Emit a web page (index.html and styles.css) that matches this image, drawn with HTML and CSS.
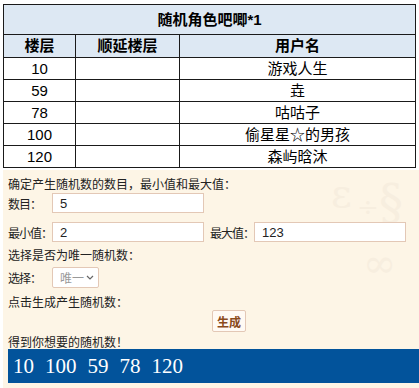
FILE: index.html
```html
<!DOCTYPE html>
<html lang="zh-CN">
<head>
    <meta charset="UTF-8">
    <meta name="viewport" content="width=device-width, initial-scale=1.0">
    <title>随机角色吧唧</title>
    <link rel="stylesheet" href="styles.css">
</head>
<body>
    <table class="result-table">
        <colgroup>
            <col class="col-floor">
            <col class="col-delay">
            <col>
        </colgroup>
        <tr class="title-row">
            <th colspan="3">随机角色吧唧*1</th>
        </tr>
        <tr class="head-row">
            <th>楼层</th>
            <th>顺延楼层</th>
            <th>用户名</th>
        </tr>
        <tr><td>10</td><td></td><td>游戏人生</td></tr>
        <tr><td>59</td><td></td><td>垚</td></tr>
        <tr><td>78</td><td></td><td>咕咕子</td></tr>
        <tr><td>100</td><td></td><td>偷星星☆的男孩</td></tr>
        <tr><td>120</td><td></td><td>森屿晗沐</td></tr>
    </table>

    <div class="panel">
        <div class="watermark">
            <span class="wm wm-1">ε</span>
            <span class="wm wm-2">÷</span>
            <span class="wm wm-3">§</span>
            <span class="wm wm-4">∞</span>
        </div>

        <p class="tip tip-first">确定产生随机数的数目，最小值和最大值：</p>
        <div class="form-row row-count">
            <label class="field-label">数目：</label>
            <input type="text" class="field" value="5">
        </div>
        <div class="form-row row-range">
            <label class="field-label">最小值：</label>
            <input type="text" class="field" value="2">
            <label class="field-label label-max">最大值：</label>
            <input type="text" class="field" value="123">
        </div>

        <p class="tip tip-unique">选择是否为唯一随机数：</p>
        <div class="form-row row-select">
            <label class="field-label">选择：</label>
            <div class="choice-wrap">
                <select class="choice">
                    <option>唯一</option>
                    <option>可重复</option>
                </select>
                <svg class="chevron" width="8" height="5" viewBox="0 0 8 5">
                    <path d="M1 1 L4 4 L7 1" fill="none" stroke="#666" stroke-width="1.2"/>
                </svg>
            </div>
        </div>

        <p class="tip tip-click">点击生成产生随机数：</p>
        <div class="btn-row">
            <button type="button" class="gen-btn">生成</button>
        </div>

        <p class="tip tip-result">得到你想要的随机数！</p>
        <div class="numbers">
            <span>10</span>
            <span>100</span>
            <span>59</span>
            <span>78</span>
            <span>120</span>
        </div>
    </div>
</body>
</html>
```

FILE: styles.css
```css
body {
    margin: 0;
    padding: 4px 0 0 3px;
    font-family: "Liberation Sans", Arial, "Noto Sans CJK SC", sans-serif;
    color: #000;
    background: #fff;
    overflow: hidden;
}
.result-table {
    width: 413px;
    border-collapse: collapse;
    font-size: 15px;
    table-layout: fixed;
}
.col-floor {
    width: 72px;
}
.col-delay {
    width: 104px;
}
.result-table th,
.result-table td {
    border: 1px solid #1a1a1a;
    text-align: center;
    padding: 0;
    white-space: nowrap;
    font-family: "Liberation Sans", "Noto Sans CJK SC", sans-serif;
}
.result-table td {
    height: 21px;
    line-height: 20px;
}
.title-row th {
    height: 29px;
    line-height: 20px;
    background: #dde8f3;
    font-size: 15px;
}
.head-row th {
    height: 22px;
    line-height: 20px;
    background: #dde8f3;
    font-size: 15px;
}

.panel {
    position: relative;
    margin-top: 2px;
    height: 218px;
    background: #fdf5e6;
    font-family: "Noto Sans CJK SC", sans-serif;
    font-size: 12px;
    color: #222;
    padding-left: 5px;
    overflow: hidden;
}
.watermark {
    position: absolute;
    right: 0;
    top: 0;
    width: 90px;
    height: 130px;
    color: #f7eedf;
}
.wm {
    position: absolute;
    font-family: "DejaVu Serif", serif;
}
.wm-1 {
    left: 2px;
    top: 0;
    font-size: 40px;
}
.wm-2 {
    left: 28px;
    top: 22px;
    font-size: 26px;
}
.wm-3 {
    left: 50px;
    top: 4px;
    font-size: 48px;
}
.wm-4 {
    left: 34px;
    top: 70px;
    font-size: 40px;
}
.tip {
    position: relative;
    margin: 0;
    line-height: 16px;
    white-space: nowrap;
}
.tip-first {
    padding-top: 6px;
}
.form-row {
    position: relative;
    display: flex;
    align-items: center;
    height: 20px;
}
.row-count {
    margin-top: 1px;
}
.row-range {
    margin-top: 9px;
}
.field-label {
    flex: 0 0 44px;
    min-width: 0;
    white-space: nowrap;
    letter-spacing: -1px;
}
.label-max {
    margin-left: 6px;
}
.field {
    box-sizing: border-box;
    flex: 0 0 152px;
    min-width: 0;
    width: 152px;
    height: 20px;
    border: 1px solid #e3c8b6;
    background: #fff;
    padding: 0 7px;
    font-family: "Liberation Sans", Arial, sans-serif;
    font-size: 13px;
    color: #222;
    outline: none;
}
.tip-unique {
    margin-top: 5px;
}
.row-select {
    margin-top: 4px;
    height: 21px;
}
.choice-wrap {
    position: relative;
    flex: 0 0 47px;
    height: 21px;
}
.choice {
    box-sizing: border-box;
    appearance: none;
    -webkit-appearance: none;
    width: 47px;
    height: 21px;
    border: 1px solid #e3c8b6;
    border-radius: 2px;
    background: #fff;
    color: #999;
    font-family: "Noto Sans CJK SC", sans-serif;
    font-size: 12px;
    padding: 0 0 0 7px;
    outline: none;
}
.chevron {
    position: absolute;
    right: 5px;
    top: 8px;
    pointer-events: none;
}
.tip-click {
    margin-top: 6px;
}
.btn-row {
    position: relative;
    display: flex;
    padding-left: 204px;
}
.gen-btn {
    box-sizing: border-box;
    width: 34px;
    height: 22px;
    padding: 0;
    border: 1px solid #e3c8b6;
    border-radius: 2px;
    background: #fffaf4;
    color: #8a4b1c;
    font-family: "Noto Sans CJK SC", sans-serif;
    font-size: 12px;
    font-weight: bold;
}
.tip-result {
    margin-top: 2px;
    line-height: 15px;
}
.numbers {
    position: relative;
    display: flex;
    gap: 11px;
    height: 34px;
    align-items: center;
    padding-left: 5px;
    background: #02539b;
    color: #fff;
    font-family: "Liberation Serif", "Times New Roman", serif;
    font-size: 21px;
}
```
